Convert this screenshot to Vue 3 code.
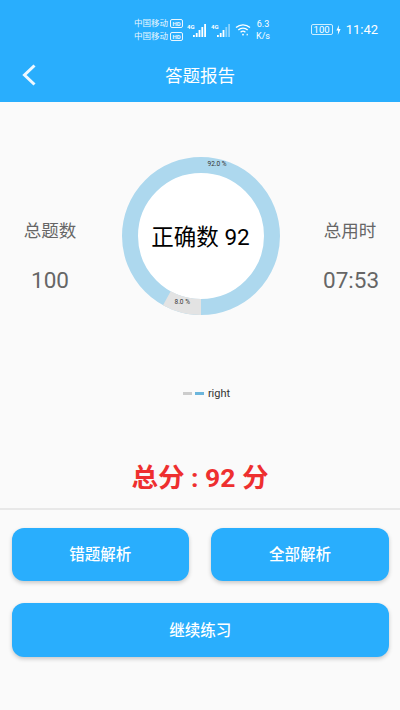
<template>
  <div class="page">
    <header class="top">
      <div class="status">
        <div class="carriers">
          <div class="carrier">中国移动 <span class="hd">HD</span></div>
          <div class="carrier">中国移动 <span class="hd">HD</span></div>
        </div>
        <div class="signal first">
          <span class="tag">4G</span>
          <svg width="14" height="14" viewBox="0 0 14 14">
            <rect v-for="(h, i) in [2, 4, 7, 10, 13]" :key="i" :x="i * 2.8" :y="14 - h" width="1.8" :height="h" fill="#fff" />
          </svg>
        </div>
        <div class="signal">
          <span class="tag">4G</span>
          <svg width="14" height="14" viewBox="0 0 14 14">
            <rect v-for="(h, i) in [2, 4, 7, 10, 13]" :key="i" :x="i * 2.8" :y="14 - h" width="1.8" :height="h" fill="#fff" :opacity="i > 2 ? 0.45 : 1" />
          </svg>
        </div>
        <svg class="wifi" width="16" height="13" viewBox="0 0 16 13" fill="none" stroke="#fff" stroke-width="1.3">
          <path d="M1 4.6C5 .9 11 .9 15 4.6" />
          <path d="M3.3 7C6 4.6 10 4.6 12.7 7" />
          <path d="M5.6 9.2C7 8 9 8 10.4 9.2" />
          <rect x="7.2" y="10.8" width="1.6" height="1.6" fill="#fff" stroke="none" />
          <rect x="11.6" y="10.8" width="1.2" height="1.6" fill="#fff" stroke="none" />
        </svg>
        <div class="speed">
          <div>6.3</div>
          <div>K/s</div>
        </div>
        <div class="right">
          <span class="battery">100</span>
          <svg width="5" height="10" viewBox="0 0 5 10"><path d="M3 0 .4 5.6h1.8L1.8 10l2.8-6H2.7z" fill="#fff" /></svg>
          <span class="time">11:42</span>
        </div>
      </div>
      <div class="nav">
        <svg class="back" width="16" height="24" viewBox="0 0 16 24" fill="none" stroke="#eef8ff" stroke-width="3">
          <path d="M13.5 2.5 3.5 12l10 9.5" />
        </svg>
        <span class="title">答题报告</span>
      </div>
    </header>

    <main class="report">
      <section class="stats">
        <div class="stat">
          <div class="label">总题数</div>
          <div class="value">100</div>
        </div>
        <div class="ring">
          <svg width="158" height="158" viewBox="0 0 158 158">
            <circle cx="79" cy="79" r="71" fill="#fff" stroke="#add8ee" stroke-width="16" />
            <circle
              cx="79"
              cy="79"
              r="71"
              fill="none"
              stroke="#e3e3e3"
              stroke-width="16"
              pathLength="100"
              stroke-dasharray="8 92"
              transform="rotate(90 79 79)"
            />
          </svg>
          <span class="pct pct-big">92.0 %</span>
          <span class="pct pct-small">8.0 %</span>
          <span class="correct">正确数 92</span>
        </div>
        <div class="stat">
          <div class="label">总用时</div>
          <div class="value">07:53</div>
        </div>
      </section>

      <div class="legend">
        <span class="dash gray"></span>
        <span class="dash blue"></span>
        <span class="legend-text">right</span>
      </div>

      <div class="score">总分 : 92 分</div>
    </main>

    <section class="actions">
      <div class="row">
        <button class="half">错题解析</button>
        <button class="half">全部解析</button>
      </div>
      <button class="wide">继续练习</button>
    </section>
  </div>
</template>

<script setup>
</script>

<style>
html, body {
  margin: 0;
  background: #fafafa;
}
</style>

<style scoped>
.page {
  width: 400px;
  height: 710px;
  overflow: hidden;
  background: #fafafa;
  font-family: Roboto, "Noto Sans CJK SC", sans-serif;
}
.top {
  height: 102px;
  background: #29aefd;
  color: #fff;
}
.status {
  height: 50px;
  display: flex;
  align-items: center;
  padding: 9px 22px 0 134px;
  box-sizing: border-box;
}
.carriers {
  width: 50px;
  font-size: 8.5px;
  line-height: 13px;
  white-space: nowrap;
  opacity: 0.9;
}
.hd {
  display: inline-block;
  font-size: 6px;
  font-weight: 700;
  line-height: 7px;
  padding: 0 1.5px;
  border: 1px solid #fff;
  border-radius: 2px;
}
.signal {
  display: flex;
  align-items: flex-end;
  margin-left: 4px;
}
.first {
  margin-left: 3px;
}
.tag {
  font-size: 6px;
  font-weight: 700;
  line-height: 7px;
  align-self: flex-start;
  width: 6px;
  white-space: nowrap;
}
.wifi {
  margin-left: 4px;
}
.speed {
  margin-left: 5px;
  font-size: 9px;
  line-height: 12px;
  text-align: center;
}
.right {
  margin-left: auto;
  display: flex;
  align-items: center;
  gap: 3px;
}
.battery {
  font-size: 9.5px;
  line-height: 9px;
  padding: 0 2px;
  border: 1px solid #cdeeff;
  border-radius: 2px;
}
.time {
  font-size: 13px;
  margin-left: 2px;
}
.nav {
  position: relative;
  height: 52px;
  display: flex;
  align-items: center;
  justify-content: center;
}
.back {
  position: absolute;
  left: 21px;
  top: 13px;
}
.title {
  font-size: 17.5px;
  margin-top: -4px;
}
.report {
  height: 408px;
  box-sizing: border-box;
  padding-top: 55px;
  border-bottom: 2px solid #e8e8e8;
}
.stats {
  display: flex;
  align-items: center;
  justify-content: space-between;
  padding: 0 23px;
}
.stat {
  width: 54px;
  padding-top: 41px;
  text-align: center;
  color: #666;
}
.label {
  font-size: 17.5px;
  line-height: 24px;
}
.value {
  font-size: 22.5px;
  line-height: 30px;
  margin-top: 22px;
}
.ring {
  position: relative;
  width: 158px;
  height: 158px;
  margin-left: 1px;
}
.ring svg {
  display: block;
}
.pct {
  position: absolute;
  font-size: 6.5px;
  color: #333;
}
.pct-big {
  left: 86px;
  top: 3px;
}
.pct-small {
  left: 53px;
  top: 141px;
}
.correct {
  position: absolute;
  inset: 0;
  padding-bottom: 3px;
  display: flex;
  align-items: center;
  justify-content: center;
  font-size: 22.5px;
  color: #000;
}
.legend {
  margin-top: 71px;
  padding-left: 13px;
  display: flex;
  justify-content: center;
  align-items: center;
  gap: 3px;
  height: 14px;
}
.dash {
  width: 9px;
  height: 3px;
}
.gray {
  background: #ccc;
}
.blue {
  background: #6cb6dc;
}
.legend-text {
  font-size: 11px;
  color: #333;
  margin-left: 1px;
}
.score {
  margin-top: 61px;
  text-align: center;
  font-size: 26.5px;
  font-weight: 700;
  line-height: 34px;
  color: #ee2f2f;
}
.actions {
  padding: 18px 11px 0 11.5px;
  display: flex;
  flex-direction: column;
  gap: 22px;
}
.row {
  display: flex;
  gap: 22px;
}
button {
  border: none;
  border-radius: 12px;
  background: #29aefd;
  color: #fff;
  font-family: inherit;
  font-size: 15.5px;
  font-weight: 500;
  box-shadow: 0 2px 4px rgba(0, 0, 0, 0.2);
}
.half {
  flex: 1;
  height: 53px;
  padding-bottom: 5px;
}
.wide {
  width: 100%;
  height: 54px;
  padding-bottom: 3px;
}
</style>
